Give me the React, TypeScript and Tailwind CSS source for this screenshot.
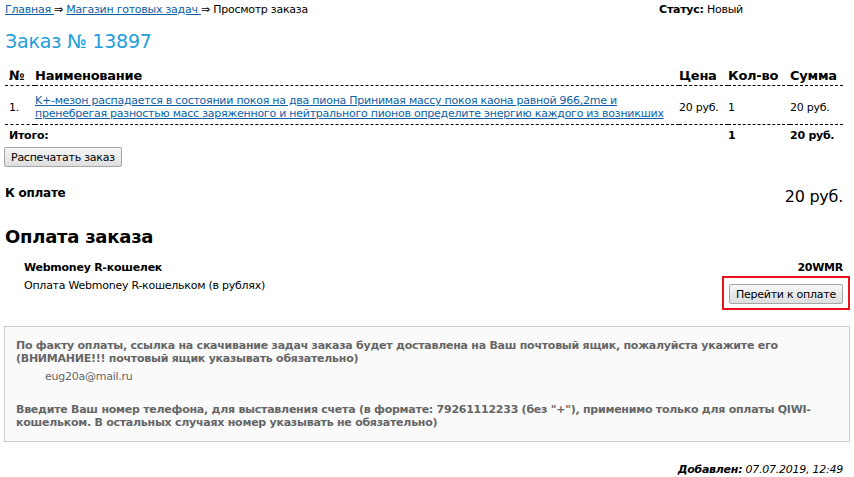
import React from 'react'

const font = { fontFamily: '"DejaVu Sans", Verdana, sans-serif' }

export default function App() {
  return (
    <div className="bg-white w-[854px] h-[477px] overflow-hidden text-black text-[11px] leading-[13px] tracking-[-0.25px] px-[5px] pt-[3px] whitespace-nowrap" style={font}>
      <div className="flex justify-between">
        <div>
          <a className="underline text-[#0e5fa6]">Главная </a> ⇒{' '}
          <a className="underline text-[#0e5fa6]">Магазин готовых задач </a> ⇒ Просмотр заказа
        </div>
        <div className="mr-[106px]">
          <b>Статус:</b> Новый
        </div>
      </div>

      <h1 className="text-[19px] leading-[24px] tracking-[-0.2px] text-[#22a0dc] mt-[13px]">Заказ № 13897</h1>

      <table className="w-[838px] mt-[16px] border-collapse">
        <thead>
          <tr className="text-[13px] font-bold border-b border-dashed border-black">
            <th className="text-left pl-[4px] pr-[4px] w-[30px] pb-[3px]">№</th>
            <th className="text-left pb-[3px]">Наименование</th>
            <th className="text-left w-[49px] pb-[3px]">Цена</th>
            <th className="text-left w-[62px] pb-[3px]">Кол-во</th>
            <th className="text-left w-[53px] pb-[3px]">Сумма</th>
          </tr>
        </thead>
        <tbody>
          <tr className="border-b border-dashed border-black">
            <td className="pl-[4px] pt-[8px] pb-[4px] align-middle">1.</td>
            <td className="pt-[8px] pb-[4px]">
              <a className="underline text-[#0e5fa6]">
                K+-мезон распадается в состоянии покоя на два пиона Принимая массу покоя каона равной 966,2me и
                <br />
                пренебрегая разностью масс заряженного и нейтрального пионов определите энергию каждого из возникших
              </a>
            </td>
            <td className="pt-[5px]">20 руб.</td>
            <td className="pt-[5px]">1</td>
            <td className="pt-[5px]">20 руб.</td>
          </tr>
          <tr className="font-bold">
            <td colSpan={2} className="pl-[4px] pt-[4px] pb-[4px]">Итого:</td>
            <td></td>
            <td className="pt-[4px] pb-[4px]">1</td>
            <td className="pt-[4px] pb-[4px]">20 руб.</td>
          </tr>
        </tbody>
      </table>

      <button className="-ml-[1px] mt-[1px] h-[20px] px-[6px] border border-[#a6a6a6] rounded-[2px] bg-gradient-to-b from-[#f6f6f6] to-[#dedede] text-[11px] leading-[13px]">
        Распечатать заказ
      </button>

      <div className="flex justify-between items-end mt-[18px] pr-[6px]">
        <div className="text-[12px] font-bold leading-[16px]">К оплате</div>
        <div className="text-[16px] leading-[20px] -mb-[6px]">20 руб.</div>
      </div>

      <h2 className="text-[18px] leading-[22px] font-bold mt-[25px]">Оплата заказа</h2>

      <div className="pl-[19px] pr-[6px] mt-[13px]">
        <div className="flex justify-between font-bold">
          <span>Webmoney R-кошелек</span>
          <span>20WMR</span>
        </div>
        <div className="flex justify-between items-start mt-[5px]">
          <span>Оплата Webmoney R-кошельком (в рублях)</span>
          <div className="border-2 border-[#e8141c] px-[5px] pt-[6px] pb-[4px] -mr-[7px] -mt-[3px]">
            <button className="h-[20px] px-[6px] border border-[#a6a6a6] rounded-[2px] bg-gradient-to-b from-[#f6f6f6] to-[#dedede] text-[11px] leading-[13px]">
              Перейти к оплате
            </button>
          </div>
        </div>
      </div>

      <div className="mt-[16px] -ml-[1px] w-[846px] border border-[#cccccc] bg-[#fafafa] text-[#666666] font-bold px-[11px] pt-[12px] pb-[12px]">
        <p>
          По факту оплаты, ссылка на скачивание задач заказа будет доставлена на Ваш почтовый ящик, пожалуйста укажите его
          <br />
          (ВНИМАНИЕ!!! почтовый ящик указывать обязательно)
        </p>
        <p className="font-normal pl-[29px] mt-[5px]">eug20a@mail.ru</p>
        <p className="mt-[20px]">
          Введите Ваш номер телефона, для выставления счета (в формате: 79261112233 (без "+"), применимо только для оплаты QIWI-
          <br />
          кошельком. В остальных случаях номер указывать не обязательно)
        </p>
      </div>

      <div className="text-right italic pr-[6px] mt-[21px]">
        <b>Добавлен:</b> 07.07.2019, 12:49
      </div>
    </div>
  )
}
